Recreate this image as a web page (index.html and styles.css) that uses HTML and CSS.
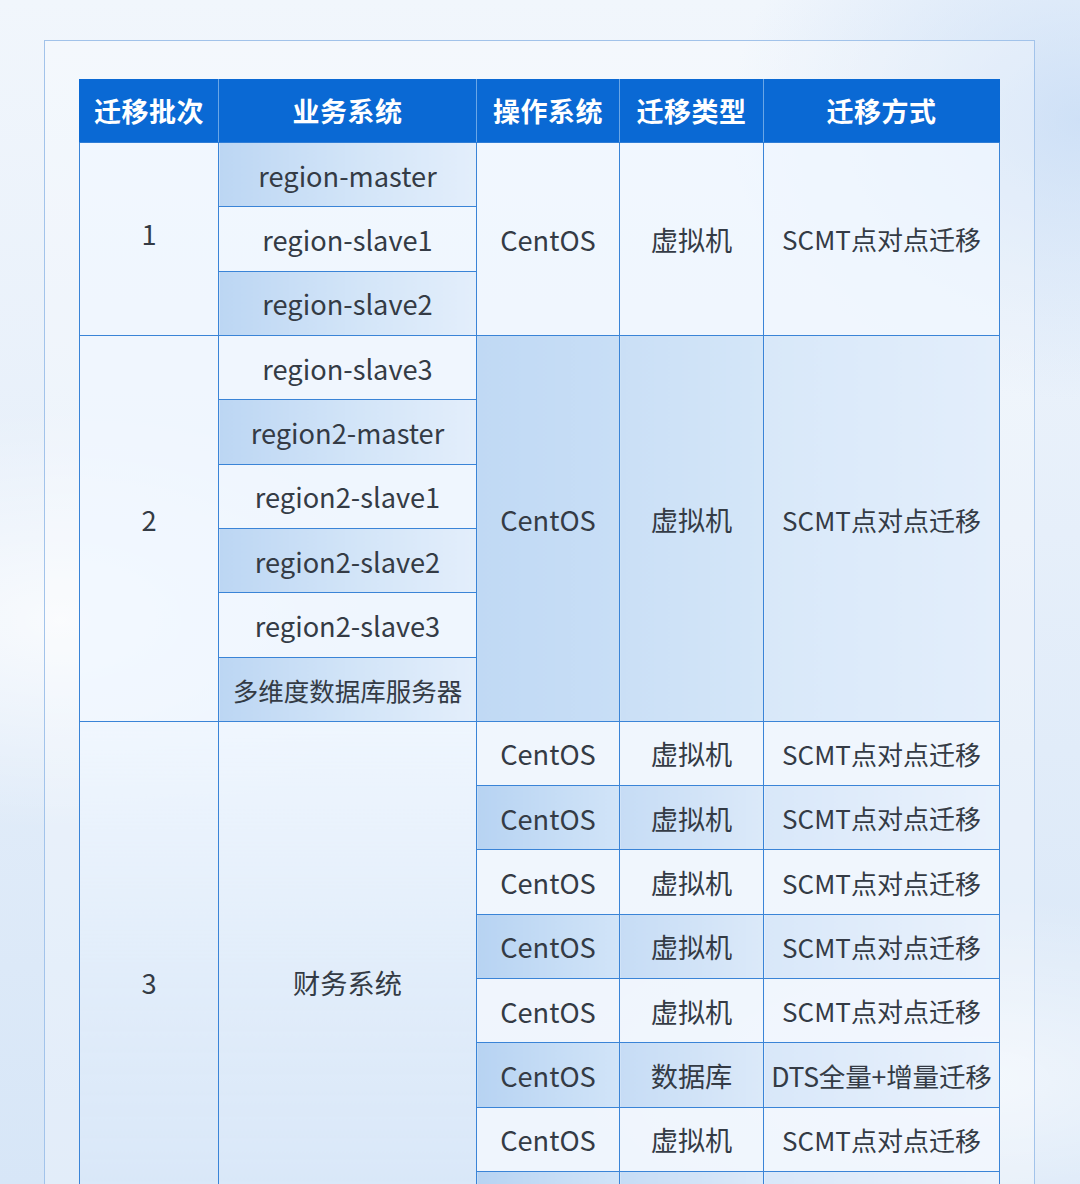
FILE: index.html
```html
<!DOCTYPE html>
<html lang="zh-CN">
<head>
<meta charset="utf-8">
<title>迁移计划</title>
<link rel="stylesheet" href="styles.css">
</head>
<body>
<div class="page">
  <div class="frame">
    <table class="plan">
      <colgroup>
        <col class="c1"><col class="c2"><col class="c3"><col class="c4"><col class="c5">
      </colgroup>
      <thead>
        <tr>
          <th>迁移批次</th><th>业务系统</th><th>操作系统</th><th>迁移类型</th><th>迁移方式</th>
        </tr>
      </thead>
      <tbody>
        <tr>
          <td rowspan="3" class="batch b1 lite">1</td>
          <td class="sys blue">region-master</td>
          <td rowspan="3" class="lite">CentOS</td>
          <td rowspan="3" class="lite">虚拟机</td>
          <td rowspan="3" class="lite way">SCMT点对点迁移</td>
        </tr>
        <tr><td class="sys lite">region-slave1</td></tr>
        <tr><td class="sys blue">region-slave2</td></tr>

        <tr>
          <td rowspan="6" class="batch b2 lite">2</td>
          <td class="sys lite">region-slave3</td>
          <td rowspan="6" class="m-os b2">CentOS</td>
          <td rowspan="6" class="m-type b2">虚拟机</td>
          <td rowspan="6" class="m-way b2 way">SCMT点对点迁移</td>
        </tr>
        <tr><td class="sys blue">region2-master</td></tr>
        <tr><td class="sys lite">region2-slave1</td></tr>
        <tr><td class="sys blue">region2-slave2</td></tr>
        <tr><td class="sys lite">region2-slave3</td></tr>
        <tr><td class="sys blue small">多维度数据库服务器</td></tr>

        <tr class="lt">
          <td rowspan="8" class="batch b3 deep">3</td>
          <td rowspan="8" class="b3 deep">财务系统</td>
          <td>CentOS</td><td>虚拟机</td><td class="way">SCMT点对点迁移</td>
        </tr>
        <tr class="bl"><td>CentOS</td><td>虚拟机</td><td class="way">SCMT点对点迁移</td></tr>
        <tr class="lt"><td>CentOS</td><td>虚拟机</td><td class="way">SCMT点对点迁移</td></tr>
        <tr class="bl"><td>CentOS</td><td>虚拟机</td><td class="way">SCMT点对点迁移</td></tr>
        <tr class="lt"><td>CentOS</td><td>虚拟机</td><td class="way">SCMT点对点迁移</td></tr>
        <tr class="bl"><td>CentOS</td><td>数据库</td><td class="dts">DTS全量+增量迁移</td></tr>
        <tr class="lt"><td>CentOS</td><td>虚拟机</td><td class="way">SCMT点对点迁移</td></tr>
        <tr class="bl"><td>CentOS</td><td>虚拟机</td><td class="way">SCMT点对点迁移</td></tr>
      </tbody>
    </table>
  </div>
</div>
</body>
</html>
```

FILE: styles.css
```css
html, body {
  margin: 0;
  padding: 0;
}

body {
  width: 1080px;
  height: 1184px;
  overflow: hidden;
  font-family: "Noto Sans CJK SC", "Noto Sans", sans-serif;
  background:
    radial-gradient(ellipse 520px 300px at 60px 620px, rgba(255,255,255,0.75), rgba(255,255,255,0) 70%),
    radial-gradient(ellipse 600px 260px at 980px 1080px, rgba(255,255,255,0.6), rgba(255,255,255,0) 70%),
    radial-gradient(ellipse 500px 400px at 1080px 120px, rgba(196,218,245,0.75), rgba(196,218,245,0) 70%),
    linear-gradient(180deg, #f1f6fc 0%, #e6effa 45%, #d7e6f7 100%);
}

.page {
  padding: 40px 0 0 44px;
}

.frame {
  width: 991px;
  height: 1200px;
  border: 1.5px solid #a2c3ea;
  border-bottom: none;
  background: rgba(255, 255, 255, 0.28);
  box-sizing: border-box;
  padding: 38px 0 0 34px;
}

.plan {
  border-collapse: collapse;
  table-layout: fixed;
  width: 920px;
  color: #343b45;
}

.c1 { width: 139px; }
.c2 { width: 258px; }
.c3 { width: 143px; }
.c4 { width: 144px; }
.c5 { width: 236px; }

.plan th {
  height: 63px;
  background: #0a69d4;
  color: #ffffff;
  font-size: 27px;
  font-weight: 700;
  border-left: 1px solid #6aa6e6;
  border-right: 1px solid #6aa6e6;
  border-bottom: 1px solid #2f7dd6;
  padding: 0;
  letter-spacing: 0.5px;
}

.plan th:first-child { border-left: 1px solid #0a69d4; }
.plan th:last-child { border-right: 1px solid #0a69d4; }

.plan td {
  height: 63.32px;
  padding: 0;
  text-align: center;
  vertical-align: middle;
  font-size: 27.2px;
  border: 1px solid #3a84d7;
  white-space: nowrap;
}

.plan td.way { font-size: 26px; }
.plan td.dts { font-size: 26.6px; letter-spacing: -0.2px; }
.plan td.small { font-size: 25.5px; }

.lite { background: rgba(240, 247, 255, 0.72); }
.blue { background: linear-gradient(90deg, #bcd6f3 0%, #d3e5f8 55%, #e3eefb 100%); }
.deep { background: linear-gradient(180deg, rgba(240,247,255,0.8) 0%, rgba(222,235,250,0.55) 50%, rgba(206,225,247,0.5) 100%); }

.b1 { padding-bottom: 12px !important; }
.b2 { padding-bottom: 18px !important; }
.b3 { padding-top: 6px !important; }

.m-os { background: linear-gradient(90deg, #c0d9f4 0%, #c8def6 100%); }
.m-type { background: linear-gradient(90deg, #cadff6 0%, #d4e6f8 100%); }
.m-way { background: linear-gradient(90deg, #d8e8f9 0%, #e3eefb 100%); }

.lt td:nth-last-child(-n+3) { background: rgba(241, 247, 254, 0.82); }
.bl td:nth-last-child(3) { background: linear-gradient(90deg, #b7d3f2 0%, #d1e4f8 100%); }
.bl td:nth-last-child(2) { background: linear-gradient(90deg, #c6dcf5 0%, #dbe9f9 100%); }
.bl td:nth-last-child(1) { background: linear-gradient(90deg, #d8e7f9 0%, #eaf2fc 100%); }
```
